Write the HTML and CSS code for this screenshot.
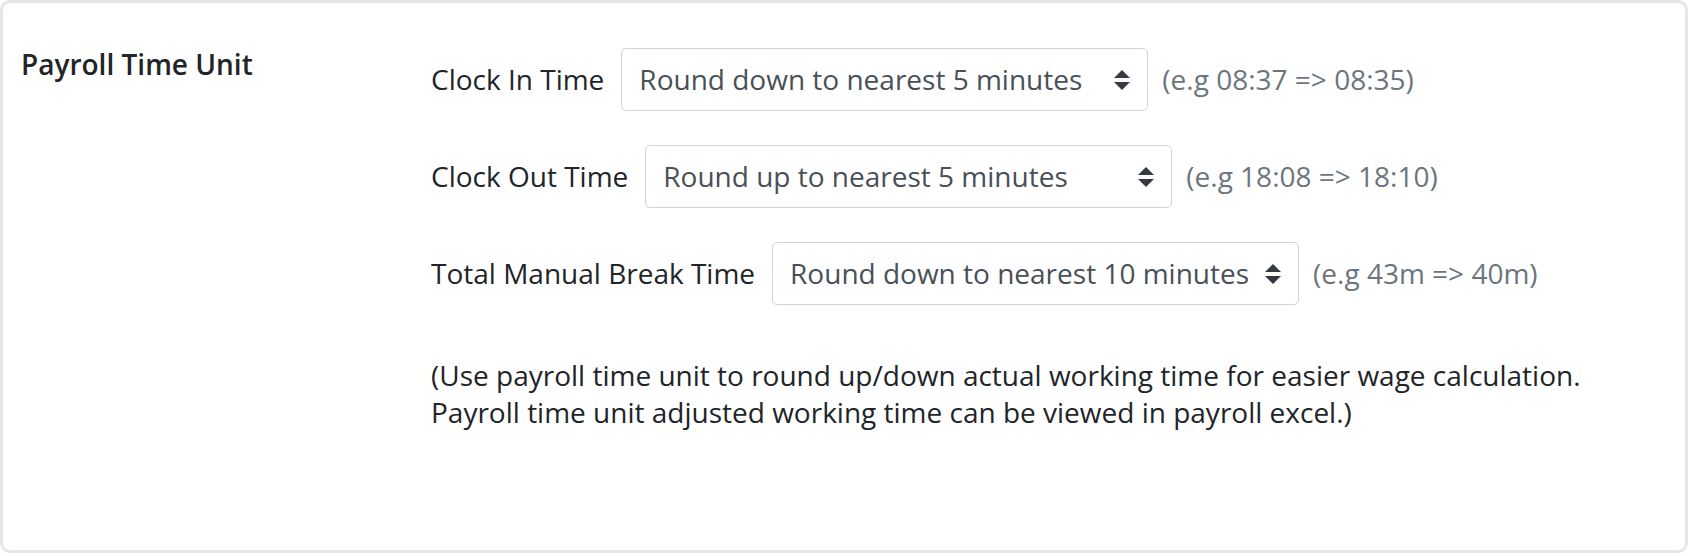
FILE: index.html
```html
<!DOCTYPE html>
<html>
<head>
<meta charset="utf-8">
<link rel="stylesheet" href="styles.css">
</head>
<body>
<div class="card">
  <div class="section">
    <div class="heading">Payroll Time Unit</div>
    <div class="content">
      <div class="field">
        <span class="label">Clock In Time</span>
        <div class="select select-in">
          <span class="value">Round down to nearest 5 minutes</span>
          <svg class="caret" viewBox="0 0 16 20" width="16" height="20"><path d="M8 0 L16 8 L0 8 Z M0 12 L16 12 L8 20 Z" fill="#343a40"/></svg>
        </div>
        <span class="hint">(e.g 08:37 =&gt; 08:35)</span>
      </div>
      <div class="field">
        <span class="label">Clock Out Time</span>
        <div class="select">
          <span class="value">Round up to nearest 5 minutes</span>
          <svg class="caret" viewBox="0 0 16 20" width="16" height="20"><path d="M8 0 L16 8 L0 8 Z M0 12 L16 12 L8 20 Z" fill="#343a40"/></svg>
        </div>
        <span class="hint">(e.g 18:08 =&gt; 18:10)</span>
      </div>
      <div class="field">
        <span class="label">Total Manual Break Time</span>
        <div class="select">
          <span class="value">Round down to nearest 10 minutes</span>
          <svg class="caret" viewBox="0 0 16 20" width="16" height="20"><path d="M8 0 L16 8 L0 8 Z M0 12 L16 12 L8 20 Z" fill="#343a40"/></svg>
        </div>
        <span class="hint">(e.g 43m =&gt; 40m)</span>
      </div>
      <p class="note">(Use payroll time unit to round up/down actual working time for easier wage calculation.<br>Payroll time unit adjusted working time can be viewed in payroll excel.)</p>
    </div>
  </div>
</div>
</body>
</html>
```

FILE: styles.css
```css
html, body {
  margin: 0;
  padding: 0;
  background: #ffffff;
}

body {
  font-family: "Open Sans", "Noto Sans", sans-serif;
  font-size: 28px;
  line-height: 1.4;
  color: #212529;
}

.card {
  box-sizing: border-box;
  width: 1688px;
  height: 553px;
  border: 3px solid #e6e6e6;
  border-radius: 10px;
  padding: 45px 18px 0 18px;
}

.section {
  display: flex;
  align-items: flex-start;
}

.heading {
  width: 410px;
  flex: none;
  font-weight: 600;
  margin-top: -3px;
}

.content {
  display: flex;
  flex-direction: column;
}

.field {
  display: flex;
  align-items: center;
  margin-bottom: 34px;
}

.label {
  margin-right: 17px;
  white-space: nowrap;
}

.select {
  box-sizing: border-box;
  width: 527px;
  height: 63px;
  border: 1px solid #ced4da;
  border-radius: 5px;
  padding: 0 17px 0 17px;
  display: flex;
  align-items: center;
  justify-content: space-between;
  color: #495057;
  flex: none;
}

.value {
  white-space: nowrap;
}

.caret {
  flex: none;
  width: 16px;
  height: 20px;
}

.hint {
  margin-left: 14px;
  color: #6c757d;
  white-space: nowrap;
}

.note {
  margin: 18px 0 0 0;
  line-height: 37px;
}
```
